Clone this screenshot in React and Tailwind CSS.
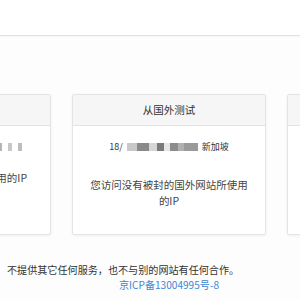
import React from "react";

const cjk = { fontFamily: '"Noto Sans CJK SC", "Noto Sans", sans-serif' };

const Mosaic = ({ blocks }) => (
  <span className="inline-flex items-center blur-[0.5px]">
    {blocks.map((b, i) => (
      <span key={i} className={`inline-block h-[8px] ${b}`} />
    ))}
  </span>
);

const Card = ({ title, ipPrefix, blocks, place, text, textTop }) => (
  <div className="w-[194px] shrink-0 bg-white border border-[#e4e4e4] rounded-[2px] shadow-[0_1px_3px_rgba(0,0,0,0.06)] flex flex-col">
    <div className="h-[31px] bg-[#f6f6f6] border-b border-[#e4e4e4] flex items-center justify-center text-[10.5px] text-[#333]">
      {title}
    </div>
    <div className="px-[14px] pt-[15px] pb-[25px] text-center">
      <div className="h-[12px] flex items-center justify-center gap-[4px] text-[9px] leading-[12px] text-[#333]">
        <span>{ipPrefix}</span>
        <Mosaic blocks={blocks} />
        {place && <span>{place}</span>}
      </div>
      <p className={`${textTop} text-[10.5px] leading-[16px] text-[#444]`}>{text}</p>
    </div>
  </div>
);

export default function App() {
  return (
    <div className="w-[300px] h-[300px] overflow-hidden bg-[#fdfdfd]" style={cjk}>
      <div className="h-[36px] bg-white border-b border-[#e2e2e2] shadow-[0_1px_2px_rgba(0,0,0,0.03)]" />
      <div className="w-[1000px] ml-[-331px] pt-[58px]">
        <div className="flex justify-center gap-[21px]">
          <Card
            title="从国内测试"
            ipPrefix="11"
            blocks={[
              "w-[30px] bg-[#aaa]",
              "w-[20px] bg-[#ccc]",
              "w-[24px] bg-[#999]",
              "w-[12px] bg-[#ddd]",
              "w-[16px] bg-[#b5b5b5]",
              "w-[6px] bg-[#fff]",
              "w-[4px] bg-[#c8c8c8]",
              "w-[6px] bg-[#fff]",
              "w-[4px] bg-[#bdbdbd]",
            ]}
            text="您访问国内的网站时所使用的IP"
            textTop="mt-[17px]"
          />
          <Card
            title="从国外测试"
            ipPrefix="18/"
            blocks={[
              "w-[10px] bg-[#c8c8c8]",
              "w-[12px] bg-[#8a8a8a]",
              "w-[8px] bg-[#d6d6d6]",
              "w-[7px] bg-[#7a7a7a]",
              "w-[6px] bg-[#e6e6e6]",
              "w-[8px] bg-[#8c8c8c]",
              "w-[6px] bg-[#b0b0b0]",
              "w-[14px] bg-[#9a9a9a]",
            ]}
            place="新加坡"
            text="您访问没有被封的国外网站所使用的IP"
            textTop="mt-[24px]"
          />
          <Card
            title="从代理测试"
            ipPrefix="10"
            blocks={["w-[20px] bg-[#aaa]", "w-[12px] bg-[#ccc]", "w-[10px] bg-[#999]"]}
            place="香港"
            text="您通过代理访问网站时所使用的IP"
            textTop="mt-[24px]"
          />
        </div>
        <div className="w-[324px] mx-auto mt-[27px] text-[10.1px] leading-[15px]">
          <p className="text-[#333]">不提供其它任何服务，也不与别的网站有任何合作。</p>
          <p className="text-center text-[#3d87d2]">京ICP备13004995号-8</p>
        </div>
      </div>
    </div>
  );
}
